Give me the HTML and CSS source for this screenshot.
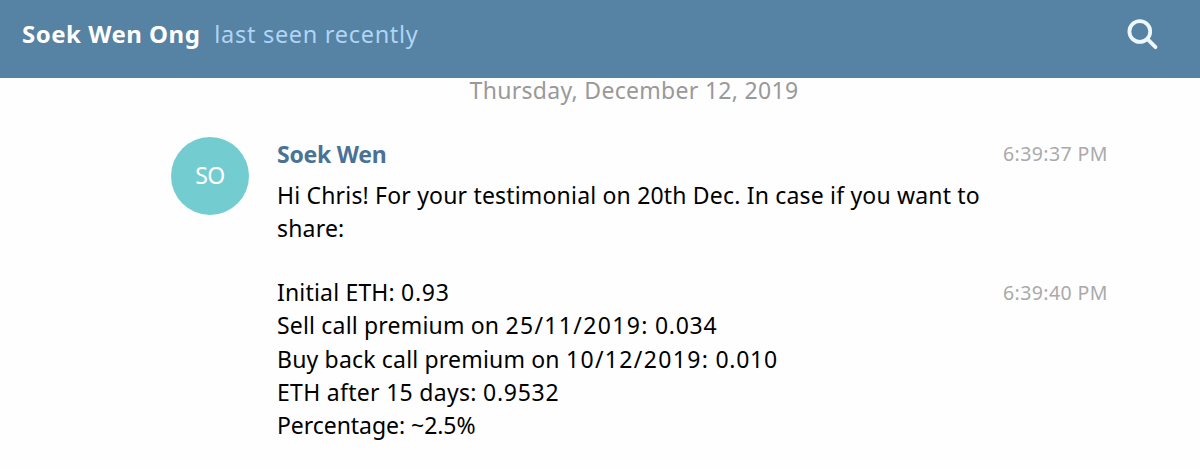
FILE: index.html
```html
<!DOCTYPE html>
<html lang="en">
<head>
  <meta charset="UTF-8" />
  <meta name="viewport" content="width=device-width, initial-scale=1.0"/>
  <title>Soek Wen Ong</title>
  <link rel="stylesheet" href="styles.css">
</head>
<body>

  <!-- Top bar -->
  <header class="header">
    <div class="peer">
      <span class="peer-name">Soek Wen Ong</span>
      <span class="peer-status">last seen recently</span>
    </div>
    <button class="search" aria-label="Search">
      <svg width="34" height="34" viewBox="0 0 34 34" fill="none" stroke="#eef8ff" stroke-width="3.8">
        <circle cx="13.8" cy="14.5" r="10.4"/>
        <path d="M21.5 22.2 L29.5 30.2" stroke-linecap="round"/>
      </svg>
    </button>
  </header>

  <!-- History -->
  <main class="history">
    <div class="date">Thursday, December 12, 2019</div>

    <div class="message">
      <div class="avatar">SO</div>
      <div class="body">
        <div class="author">Soek Wen</div>
        <div class="text">Hi Chris! For your testimonial on 20th Dec. In case if you want to share:</div>
      </div>
      <div class="time">6:39:37 PM</div>
    </div>

    <div class="message reply">
      <div class="body">
        <div class="text">
          <div>Initial ETH: <span class="num">0.93</span></div>
          <div>Sell call premium on <span class="day">25/11/2019:</span> <span class="num">0.034</span></div>
          <div>Buy back call premium on <span class="day">10/12/2019:</span> <span class="num">0.010</span></div>
          <div class="after">ETH after 15 days: <span class="num">0.9532</span></div>
          <div class="percent">Percentage: ~2.5%</div>
        </div>
      </div>
      <div class="time">6:39:40 PM</div>
    </div>
  </main>

</body>
</html>
```
FILE: styles.css
```css
body {
  margin: 0;
  height: 469px;
  overflow: hidden;
  background-color: #fefefe;
  color: #000;
  font-family: "Noto Sans", "Open Sans", sans-serif;
  font-size: 23px;
}

.header {
  display: flex;
  justify-content: space-between;
  box-sizing: border-box;
  height: 78px;
  padding: 17px 40px 0 22px;
  background-color: #5682a3;
}

.peer {
  display: flex;
  gap: 14px;
  line-height: 34px;
  white-space: nowrap;
}

.peer-name {
  color: #fff;
  font-size: 24px;
  font-weight: bold;
  letter-spacing: 0.5px;
}

.peer-status {
  color: #b0d4f5;
  font-size: 23.5px;
  letter-spacing: 0.7px;
}

.search {
  width: 34px;
  height: 34px;
  padding: 0;
  border: none;
  background: none;
  cursor: pointer;
}

.search svg {
  display: block;
}

.date {
  height: 59px;
  line-height: 25px;
  text-align: center;
  padding-left: 68px;
  color: #999;
  letter-spacing: 0.3px;
}

.message {
  display: flex;
  padding: 0 92px 0 171px;
}

.avatar {
  width: 78px;
  height: 78px;
  margin-right: 28px;
  border-radius: 50%;
  background-color: #73cdd0;
  color: #fff;
  line-height: 76px;
  text-align: center;
  letter-spacing: -0.5px;
}

.body {
  width: 726px;
}

.author {
  height: 42px;
  line-height: 35px;
  color: #4a7295;
  font-weight: bold;
  letter-spacing: -0.25px;
}

.text {
  line-height: 33.4px;
  letter-spacing: 0.18px;
}

.num {
  letter-spacing: 0.7px;
}

.day {
  letter-spacing: 1.35px;
}

.after {
  letter-spacing: 0.3px;
}

.percent {
  letter-spacing: -0.05px;
}

.time {
  line-height: 34px;
  color: #aaa;
  font-size: 19.5px;
  letter-spacing: 0.4px;
  white-space: nowrap;
}

.reply {
  margin-top: 30px;
  padding-left: 277px;
}
```
